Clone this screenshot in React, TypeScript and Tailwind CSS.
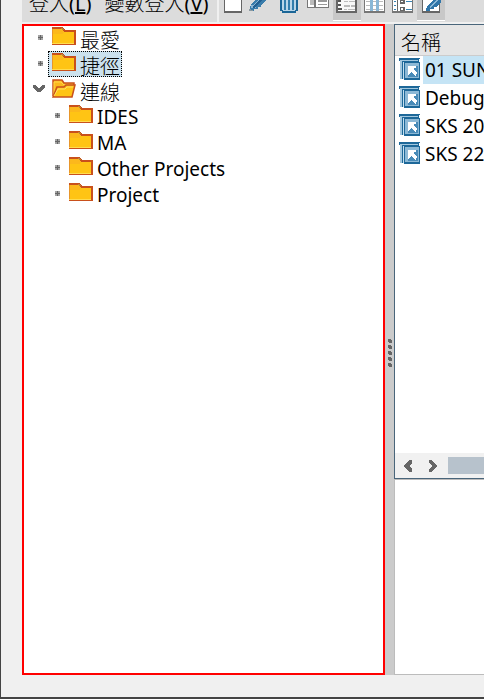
import React from 'react';

const FONT = "font-['Noto_Sans','Noto_Sans_CJK_TC',sans-serif]";

function Folder() {
  return (
    <svg className="h-5 w-6 shrink-0" viewBox="0 0 24 20" shapeRendering="crispEdges" aria-hidden="true">
      <path d="M0 1h10l3 3h11v15H0z" fill="#c9501c" />
      <path d="M1 3h8l3 3h10v11H1z" fill="#ffc414" />
      <path d="M0 3h1v15H0z" fill="#e8962a" />
      <path d="M1 3h8l3 3-2 2H1z" fill="#fcb81c" />
      <path d="M0 17h22v1H0z" fill="#ffdc50" />
      <path d="M9 2h2v1h1v1h-2v-1H9z" fill="#b8863b" />
    </svg>
  );
}

function OpenFolder() {
  return (
    <svg className="h-5 w-6 shrink-0" viewBox="0 0 24 20" aria-hidden="true">
      <path d="M1 18V2h9l2 3h10v4" fill="#fcb81c" stroke="#c9501c" strokeWidth="1.500" />
      <path d="M2 17V4h7l3 3h9" fill="none" stroke="#ffd84a" />
      <path d="M1 19L5 9h7l2-2h9l-3 12z" fill="#ffc414" stroke="#c9501c" strokeWidth="1.500" />
      <path d="M2 18L6 11h7l2-2h6" fill="none" stroke="#ffdf62" />
    </svg>
  );
}

function Marker({ open = false }: { open?: boolean }) {
  return open ? (
    <svg className="h-3 w-3 shrink-0" viewBox="0 0 12 12" shapeRendering="crispEdges" aria-hidden="true">
      <path d="M0 1h3v1h1v1h1v1h2V3h1V2h1V1h3v3h-1v1h-1v1H9v1H8v1H4V7H3V6H2V5H1V4H0z" fill="#666" />
    </svg>
  ) : (
    <svg className="h-3 w-3 shrink-0" viewBox="0 0 12 12" shapeRendering="crispEdges" aria-hidden="true">
      <path d="M5 3h5v5H5z" fill="#a4a4a4" />
      <path d="M7 3h1v5H7zM5 5h5v1H5z" fill="#666" />
    </svg>
  );
}

type Node = { label: string; cjk?: boolean; open?: boolean; selected?: boolean; children?: Node[] };

const tree: Node[] = [
  { label: '最愛', cjk: true },
  { label: '捷徑', cjk: true, selected: true },
  {
    label: '連線',
    cjk: true,
    open: true,
    children: [{ label: 'IDES' }, { label: 'MA' }, { label: 'Other Projects' }, { label: 'Project' }],
  },
];

function TreeItem({ node }: { node: Node }) {
  return (
    <li role="treeitem" aria-expanded={node.open} aria-selected={!!node.selected}>
      <div className="flex h-[26px] items-center gap-[3px]">
        <Marker open={node.open} />
        <button
          type="button"
          className={`flex h-[26px] items-start gap-1 border border-dotted pr-px pl-[3px] whitespace-nowrap ${
            node.selected ? 'border-black bg-[#cbe1ed]' : 'border-transparent'
          }`}
        >
          {node.open ? <OpenFolder /> : <Folder />}
          <span className={node.cjk ? 'pt-[3px] text-[20px] leading-6 font-light' : 'pt-px'}>{node.label}</span>
        </button>
      </div>
      {node.children && (
        <ul role="group" className="pl-[17px]">
          {node.children.map((c) => (
            <TreeItem key={c.label} node={c} />
          ))}
        </ul>
      )}
    </li>
  );
}

function ToolButton({ label, pressed, children }: { label: string; pressed?: boolean; children: React.ReactNode }) {
  return (
    <button
      type="button"
      aria-label={label}
      aria-pressed={pressed}
      className={`h-[21px] w-7 shrink-0 border-b ${pressed ? 'border-white bg-[#c8c8c8]' : 'border-transparent'}`}
    >
      <svg className="h-5 w-7" viewBox="0 0 28 20" shapeRendering="crispEdges" aria-hidden="true">
        {children}
      </svg>
    </button>
  );
}

function Toolbar() {
  return (
    <header className="flex h-[22px] shrink-0 gap-[2px] overflow-hidden">
      <div className="flex w-[195px] shrink-0 items-end gap-[13px] bg-[#dcdcdc] pb-[5px] pl-[7px] text-[20px] leading-[26px] whitespace-nowrap">
        <button type="button">
          <span className="font-light">登入</span>(<u>L</u>)
        </button>
        <button type="button">
          <span className="font-light">變數登入</span>(<u>V</u>)
        </button>
      </div>
      <div className="flex grow bg-[#dcdcdc] pl-[2px]">
        <ToolButton label="新增">
          <path d="M3 0h18v13H3z" fill="#666" />
          <path d="M4 0h16v11H4z" fill="#fff" />
        </ToolButton>
        <ToolButton label="編輯">
          <path d="M0 11l2-7 4-4h11l-5 5v2H9v2H5v2z" fill="#397cab" />
          <path d="M2 8V5h2l5-5h4L7 6v2z" fill="#8ab6d5" />
          <path d="M3 7l8-7h2L5 9z" fill="#235f91" />
          <path d="M0 9h2v1h2v1H0z" fill="#8a989f" />
        </ToolButton>
        <ToolButton label="刪除">
          <path d="M3 0h18v11h-2v2H5v-2H3z" fill="#1b6697" />
          <path d="M5 0h14v10h-1v1H6v-1H5z" fill="#b8d5e8" />
          <path d="M7 0h2v10H7zM11 0h2v10h-2zM15 0h2v10h-2z" fill="#317dac" />
        </ToolButton>
        <ToolButton label="檢視">
          <path d="M2 0h22v8H2z" fill="#777" />
          <path d="M3 0h20v7H3z" fill="#fff" />
          <path d="M5 0h4v5H5z" fill="#bbb" />
          <path d="M9 0h2v7H9z" fill="#777" />
          <path d="M13 0h9v2h-9zM13 4h9v1h-9z" fill="#999" />
        </ToolButton>
        <ToolButton label="清單檢視" pressed>
          <path d="M3 0h21v13H3z" fill="#666" />
          <path d="M5 0h17v11H5z" fill="#f8f8f8" />
          <path d="M5 0h3v2H5zM5 4h3v2H5zM5 8h4v2H5z" fill="#555" />
          <path d="M11 1h4v1h-4zM16 1h6v1h-6zM11 5h6v2h-6zM18 5h4v2h-4zM11 9h3v1h-3zM15 9h7v1h-7z" fill="#bbb" />
        </ToolButton>
        <ToolButton label="欄檢視">
          <path d="M3 0h21v13H3z" fill="#777" />
          <path d="M4 0h19v11H4z" fill="#fff" />
          <path d="M5 1h17v1H5zM5 5h17v1H5zM5 9h17v1H5z" fill="#bbb" />
          <path d="M9 0h3v11H9zM15 0h3v11h-3z" fill="#89b7d6" />
        </ToolButton>
        <ToolButton label="詳細檢視">
          <path d="M3 0h21v13H3z" fill="#777" />
          <path d="M4 0h19v11H4z" fill="#fff" />
          <path d="M5 1h2v1H5zM5 5h2v1H5zM5 9h2v1H5zM17 1h6v1h-6zM17 9h6v1h-6z" fill="#3884b4" />
          <path d="M8 0h1v11H8zM11 0h5v4h-5zM11 7h5v4h-5z" fill="#666" />
          <path d="M12 1h2v1h-2zM12 8h2v2h-2z" fill="#fff" />
        </ToolButton>
        <ToolButton label="編輯項目" pressed>
          <path d="M5 0h18v13H5z" fill="#666" />
          <path d="M6 0h16v11H6z" fill="#fff" />
          <path d="M9 11l1-5 6-6h8v2l-5 5h-2v2h-4v2z" fill="#2f75a8" />
          <path d="M12 7l7-7h2l-8 8z" fill="#8bb8d7" />
        </ToolButton>
      </div>
    </header>
  );
}

function ShortcutIcon() {
  return (
    <svg className="h-6 w-[22px] shrink-0" viewBox="0 0 22 24" shapeRendering="crispEdges" aria-hidden="true">
      <path d="M0 0h21v1h-1v3h1v18H5v-1H1V3H0z" fill="#1d6899" />
      <path d="M1 2h18v1H3v18H1z" fill="#a3c8df" />
      <path d="M4 4h1v17H4z" fill="#c5dfee" />
      <path d="M6 5h14v15H6z" fill="#8db9d6" />
      <path d="M9 8h10v11H9z" fill="#498bb8" />
      <path d="M9 8h8v2h-2v2h1v1h1v1h1v2h-1v2h-1v-1h-1v-1h-1v-1h-1v-1h-1v1h-1v1h-1v1H9z" fill="#fff" />
    </svg>
  );
}

const entries = ['01 SUN', 'Debug', 'SKS 20', 'SKS 22'];

function Arrow({ next = false }: { next?: boolean }) {
  return (
    <button type="button" aria-label={next ? '向右捲動' : '向左捲動'} className="flex w-[25px] shrink-0 items-center justify-center">
      <svg className="h-3 w-2" viewBox="0 0 8 12" shapeRendering="crispEdges" aria-hidden="true">
        <path d={next ? 'M0 0h3l5 6-5 6H0V9l3-3-3-3z' : 'M8 0H5L0 6l5 6h3V9L5 6l3-3z'} fill="#666" />
      </svg>
    </button>
  );
}

export default function App() {
  return (
    <div
      className={`${FONT} flex h-screen flex-col overflow-hidden border-b-2 border-l border-[#444] bg-[#f0f0f0] pb-[22px] pl-[21px] text-[19px] leading-6 text-black`}
    >
      <Toolbar />
      <main className="mt-[2px] flex min-h-0 grow">
        <nav aria-label="連線" className="w-[363px] shrink-0 bg-white pt-px pl-[11px] ring-2 ring-[#f00] ring-inset">
          <ul role="tree">
            {tree.map((n) => (
              <TreeItem key={n.label} node={n} />
            ))}
          </ul>
        </nav>
        <div role="separator" className="flex w-[9px] shrink-0 flex-col items-center gap-[2px] bg-[#cbcbcb] pt-[315px]">
          {[0, 1, 2, 3, 4].map((i) => (
            <svg key={i} className="h-1 w-1" viewBox="0 0 4 4" shapeRendering="crispEdges" aria-hidden="true">
              <path d="M0 0h3v1h1v3H1V3H0z" fill="#666" />
            </svg>
          ))}
        </div>
        <div className="flex min-w-0 grow flex-col">
          <section className="flex h-[455px] shrink-0 flex-col border border-r-0 border-[#49657a] bg-white">
            <table className="w-full table-fixed border-collapse">
              <thead>
                <tr className="h-[30px] border-b border-[#ccc] bg-[#e5e5e5]">
                  <th scope="col" className="pt-[6px] pl-[6px] text-left text-[20px] leading-6 font-light">
                    名稱
                  </th>
                </tr>
              </thead>
              <tbody>
                {entries.map((e, i) => (
                  <tr key={e} className="h-7">
                    <td className="p-0">
                      <div className="flex h-7 items-center gap-[2px] overflow-hidden pl-1">
                        <ShortcutIcon />
                        <span className={`h-7 grow pl-[2px] leading-7 whitespace-nowrap ${i === 0 ? 'bg-[#c5e4f5]' : ''}`}>{e}</span>
                      </div>
                    </td>
                  </tr>
                ))}
              </tbody>
            </table>
            <div className="mt-auto flex h-[25px] bg-[#f1f1f1]">
              <Arrow />
              <Arrow next />
              <div className="my-1 ml-[3px] h-[17px] grow bg-[#b7c2cc]" />
            </div>
          </section>
          <section aria-label="詳細資料" className="grow border border-r-0 border-[#bcbcbc] bg-white" />
        </div>
      </main>
    </div>
  );
}
